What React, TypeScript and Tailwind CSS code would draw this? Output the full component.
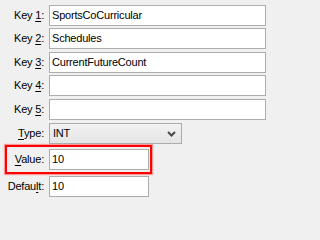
import React from "react";

function Label({ pre, u, post }: { pre: string; u: string; post: string }) {
  return (
    <span>
      {pre}
      <span className="underline underline-offset-[2px]">{u}</span>
      {post}
    </span>
  );
}

function TextBox({ value, w }: { value: string; w: string }) {
  return (
    <div className={`h-[21px] ${w} border border-[#adadad] bg-white flex items-center pl-[2px] shrink-0`}>
      {value}
    </div>
  );
}

export default function App() {
  const keys = [
    { n: "1", v: "SportsCoCurricular", mt: "mt-0" },
    { n: "2", v: "Schedules", mt: "mt-[2px]" },
    { n: "3", v: "CurrentFutureCount", mt: "mt-[3px]" },
    { n: "4", v: "", mt: "mt-[2px]" },
    { n: "5", v: "", mt: "mt-[3px]" },
  ];
  return (
    <div
      className="w-full min-w-[271px] min-h-screen bg-[#f0f0f0] text-[11px] tracking-[-0.2px] text-black pt-[5px] overflow-hidden"
      style={{ fontFamily: '"Liberation Sans", Arial, sans-serif' }}
    >
      {keys.map((k) => (
        <div key={k.n} className={`flex items-center ${k.mt}`}>
          <div className="w-[45px] text-right pr-[1px] shrink-0">
            <Label pre="Key " u={k.n} post=":" />
          </div>
          <div className="w-[4px] shrink-0" />
          <TextBox value={k.v} w="w-[217px]" />
        </div>
      ))}
      <div className="flex items-center mt-[3px]">
        <div className="w-[45px] text-right pr-[1px] shrink-0">
          <Label pre="" u="T" post="ype:" />
        </div>
        <div className="w-[4px] shrink-0" />
        <div className="h-[21px] w-[133px] border border-[#acacac] bg-gradient-to-b from-[#f2f2f2] to-[#e5e5e5] flex items-center pl-[3px] pr-[5px] justify-between">
          <span>INT</span>
          <svg width="9" height="6" viewBox="0 0 9 6">
            <path d="M1 1 L4.5 4.5 L8 1" fill="none" stroke="#4a4a4a" strokeWidth="2" />
          </svg>
        </div>
      </div>
      <div className="mt-[1px] ml-[5px] w-[147px] border-2 border-[#ff0000] shadow-[0_0_1px_1px_#ff9a9a] flex items-center py-[2px]">
        <div className="w-[38px] text-right pr-[1px] shrink-0">
          <Label pre="" u="V" post="alue:" />
        </div>
        <div className="w-[4px] shrink-0" />
        <TextBox value="10" w="w-[100px]" />
      </div>
      <div className="flex items-center mt-[2px]">
        <div className="w-[45px] text-right pr-[1px] shrink-0">
          <Label pre="Defau" u="l" post="t:" />
        </div>
        <div className="w-[4px] shrink-0" />
        <TextBox value="10" w="w-[100px]" />
      </div>
    </div>
  );
}
